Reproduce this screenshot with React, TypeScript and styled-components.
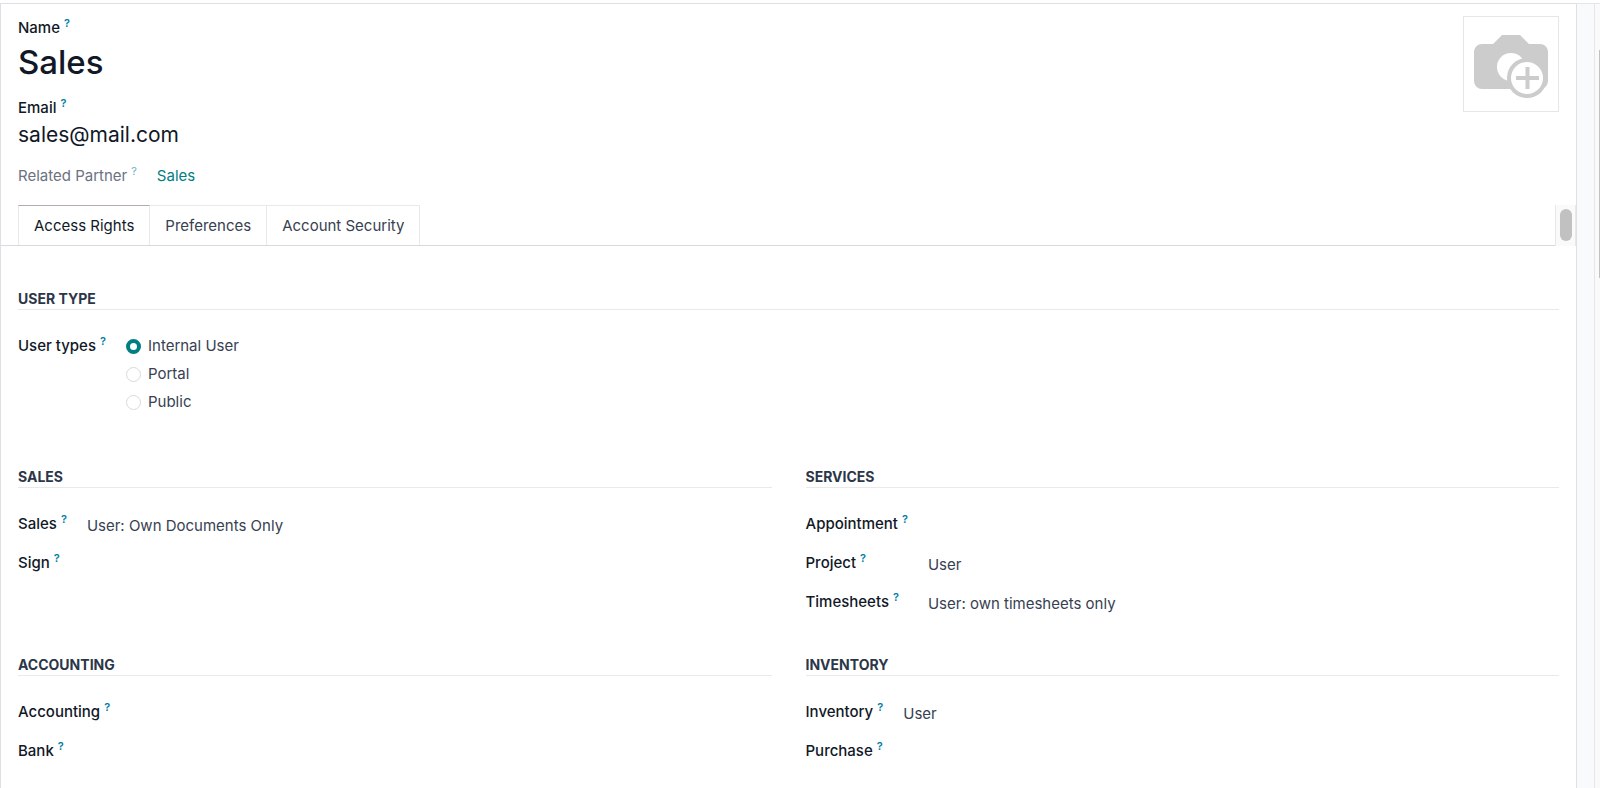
import React, { useState } from "react";
import styled, { createGlobalStyle } from "styled-components";

const GlobalStyle = createGlobalStyle`
  *, *::before, *::after { box-sizing: border-box; }
  body {
    margin: 0;
    background: #fff;
    color: #374151;
    font-family: Inter, "Liberation Sans", sans-serif;
    font-size: 15px;
    line-height: 20px;
  }
  input, select, button { font: inherit; color: inherit; }
`;

const Page = styled.div`
  display: flex;
  min-height: 100vh;
  padding-top: 3px;
`;

const Sheet = styled.main`
  flex: 1;
  min-width: 0;
  border: solid #dee0e5;
  border-width: 1px 1px 0;
`;

const Gutter = styled.div`
  width: 18px;
  background: #f8fafc;
  border: solid #e4e6ea;
  border-width: 1px 1px 0 0;
`;

const PageTrack = styled.div`
  width: 5px;
  padding-top: 46px;
  background: #fafafa;
  border-top: 1px solid #e4e6ea;
`;

const PageThumb = styled.div`
  width: 1px;
  height: 228px;
  margin-left: auto;
  background: #c1c1c1;
`;

const Header = styled.header`
  display: flex;
  justify-content: space-between;
  align-items: flex-start;
  padding: 12px 17px 0;
`;

const Identity = styled.div`
  display: flex;
  flex-direction: column;
  align-items: flex-start;
  padding-top: 2px;
`;

const Label = styled.label<{ $muted?: boolean }>`
  display: block;
  white-space: nowrap;
  font-weight: ${(p) => (p.$muted ? 400 : 500)};
  color: ${(p) => (p.$muted ? "#6b7280" : "#111827")};
`;

const HelpMark = styled.sup<{ $muted?: boolean }>`
  margin-left: 4px;
  font-size: 11px;
  line-height: 0;
  font-weight: ${(p) => (p.$muted ? 400 : 600)};
  color: ${(p) => (p.$muted ? "#67b2c4" : "#0180a5")};
`;

const TextInput = styled.input<{ $size: "title" | "subtitle" }>`
  width: 480px;
  padding: 0;
  border: 0;
  outline: 0;
  background: none;
  color: #111827;
  font-size: ${(p) => (p.$size === "title" ? 33 : 21)}px;
  font-weight: ${(p) => (p.$size === "title" ? 500 : 400)};
  height: ${(p) => (p.$size === "title" ? 48 : 32)}px;
  margin-bottom: ${(p) => (p.$size === "title" ? 12 : 16)}px;
`;

const PartnerRow = styled.div`
  display: flex;
  gap: 20px;
`;

const PartnerLink = styled.a`
  color: #017e84;
  text-decoration: none;
`;

const PhotoButton = styled.button`
  width: 96px;
  height: 96px;
  padding: 0;
  border: 1px solid #e4e6ea;
  background: #fff;
  svg { display: block; }
`;

const TabBar = styled.div`
  display: flex;
  height: 41px;
  margin-top: 19px;
`;

const TabList = styled.div`
  flex: 1;
  display: flex;
  padding-left: 17px;
  border-bottom: 1px solid #d8dadd;
`;

const Tab = styled.button<{ $active: boolean }>`
  padding: 0 15px;
  border: solid #e7e9ed;
  border-width: 1px 1px 0 0;
  background: #fff;
  color: ${(p) => (p.$active ? "#111827" : "#374151")};
  ${(p) => p.$active && "border-top-color: #b5a9b1;"}
  &:first-child { border-left-width: 1px; }
`;

const TabTrack = styled.div`
  width: 21px;
  padding: 4px 0 0 4px;
  background: #fafafa;
  border: solid #e8e8e8;
  border-width: 0 1px;
`;

const TabThumb = styled.div`
  width: 12px;
  height: 32px;
  border-radius: 6px;
  background: #c1c1c1;
`;

const Panel = styled.div`
  display: grid;
  grid-template-columns: 1fr 1fr;
  column-gap: 34px;
  row-gap: 33px;
  padding: 44px 17px 0;
`;

const Group = styled.section<{ $wide?: boolean }>`
  min-width: 0;
  ${(p) => p.$wide && "grid-column: 1 / -1; margin-bottom: 19px;"}
`;

const GroupTitle = styled.h2`
  margin: 0 0 18px;
  padding-bottom: 1px;
  border-bottom: 1px solid #e7e9ed;
  color: #2b3648;
  font-size: 14px;
  line-height: 18px;
  font-weight: 700;
  text-transform: uppercase;
`;

const Fields = styled.div`
  display: grid;
  grid-template-columns: max-content 1fr;
  grid-auto-rows: 39px;
  column-gap: 20px;
  align-items: start;
`;

const FieldLabel = styled(Label)`
  padding-top: 8px;
`;

const Select = styled.select`
  appearance: none;
  width: 100%;
  height: 39px;
  padding: 0;
  border: 0;
  outline: 0;
  background: none;
  color: #374151;
`;

const RadioField = styled.div`
  display: flex;
  gap: 20px;
`;

const RadioList = styled.div`
  display: flex;
  flex-direction: column;
  padding-top: 4px;
`;

const RadioLabel = styled.label`
  display: flex;
  align-items: center;
  gap: 7px;
  height: 28px;
`;

const Radio = styled.input`
  appearance: none;
  width: 15px;
  height: 15px;
  margin: 0;
  border: 1px solid #d8dadd;
  border-radius: 50%;
  background: #fff;
  &:checked { border: 4px solid #017e84; }
`;

type FieldData = { name: string; value?: string };
type GroupData = { title: string; fields: FieldData[] };

const groups: GroupData[] = [
  { title: "Sales", fields: [{ name: "Sales", value: "User: Own Documents Only" }, { name: "Sign" }] },
  {
    title: "Services",
    fields: [
      { name: "Appointment" },
      { name: "Project", value: "User" },
      { name: "Timesheets", value: "User: own timesheets only" },
    ],
  },
  { title: "Accounting", fields: [{ name: "Accounting" }, { name: "Bank" }] },
  { title: "Inventory", fields: [{ name: "Inventory", value: "User" }, { name: "Purchase" }] },
];

const tabs = ["Access Rights", "Preferences", "Account Security"];
const userTypes = ["Internal User", "Portal", "Public"];

function CameraIcon() {
  return (
    <svg width="94" height="94" viewBox="0 0 94 94" aria-hidden="true">
      <path
        d="M18 27h11l9-9h18l9 9h11a8 8 0 0 1 8 8v29a8 8 0 0 1-8 8H18a8 8 0 0 1-8-8V35a8 8 0 0 1 8-8z"
        fill="#ccc"
      />
      <circle cx="47" cy="50" r="14" fill="#fff" />
      <circle cx="63" cy="61" r="20" fill="#ccc" />
      <circle cx="63" cy="61" r="16" fill="#fff" />
      <path d="M52 61h23M63.500 50v22" stroke="#ccc" strokeWidth="4" />
    </svg>
  );
}

function FieldGroup({ title, fields }: GroupData) {
  return (
    <Group>
      <GroupTitle>{title}</GroupTitle>
      <Fields>
        {fields.map(({ name, value }) => {
          const id = `${title}-${name}`.toLowerCase();
          return (
            <React.Fragment key={id}>
              <FieldLabel htmlFor={id}>
                {name}
                <HelpMark>?</HelpMark>
              </FieldLabel>
              <Select id={id} defaultValue={value ?? ""}>
                <option value={value ?? ""}>{value ?? ""}</option>
              </Select>
            </React.Fragment>
          );
        })}
      </Fields>
    </Group>
  );
}

export default function App() {
  const [tab, setTab] = useState(tabs[0]);
  const [userType, setUserType] = useState(userTypes[0]);

  return (
    <Page>
      <GlobalStyle />
      <Sheet>
        <Header>
          <Identity>
            <Label htmlFor="name">
              Name<HelpMark>?</HelpMark>
            </Label>
            <TextInput id="name" $size="title" defaultValue="Sales" />
            <Label htmlFor="email">
              Email<HelpMark>?</HelpMark>
            </Label>
            <TextInput id="email" $size="subtitle" defaultValue="sales@mail.com" />
            <PartnerRow>
              <Label as="span" $muted>
                Related Partner<HelpMark $muted>?</HelpMark>
              </Label>
              <PartnerLink href="#partner">Sales</PartnerLink>
            </PartnerRow>
          </Identity>
          <PhotoButton type="button" aria-label="Upload photo">
            <CameraIcon />
          </PhotoButton>
        </Header>
        <TabBar>
          <TabList role="tablist">
            {tabs.map((t) => (
              <Tab key={t} type="button" role="tab" aria-selected={t === tab} $active={t === tab} onClick={() => setTab(t)}>
                {t}
              </Tab>
            ))}
          </TabList>
          <TabTrack>
            <TabThumb />
          </TabTrack>
        </TabBar>
        <Panel>
          <Group $wide>
            <GroupTitle>User Type</GroupTitle>
            <RadioField role="radiogroup" aria-labelledby="user-types">
              <FieldLabel as="span" id="user-types">
                User types<HelpMark>?</HelpMark>
              </FieldLabel>
              <RadioList>
                {userTypes.map((t) => (
                  <RadioLabel key={t}>
                    <Radio type="radio" name="user-type" checked={t === userType} onChange={() => setUserType(t)} />
                    {t}
                  </RadioLabel>
                ))}
              </RadioList>
            </RadioField>
          </Group>
          {groups.map((g) => (
            <FieldGroup key={g.title} {...g} />
          ))}
        </Panel>
      </Sheet>
      <Gutter />
      <PageTrack>
        <PageThumb />
      </PageTrack>
    </Page>
  );
}
